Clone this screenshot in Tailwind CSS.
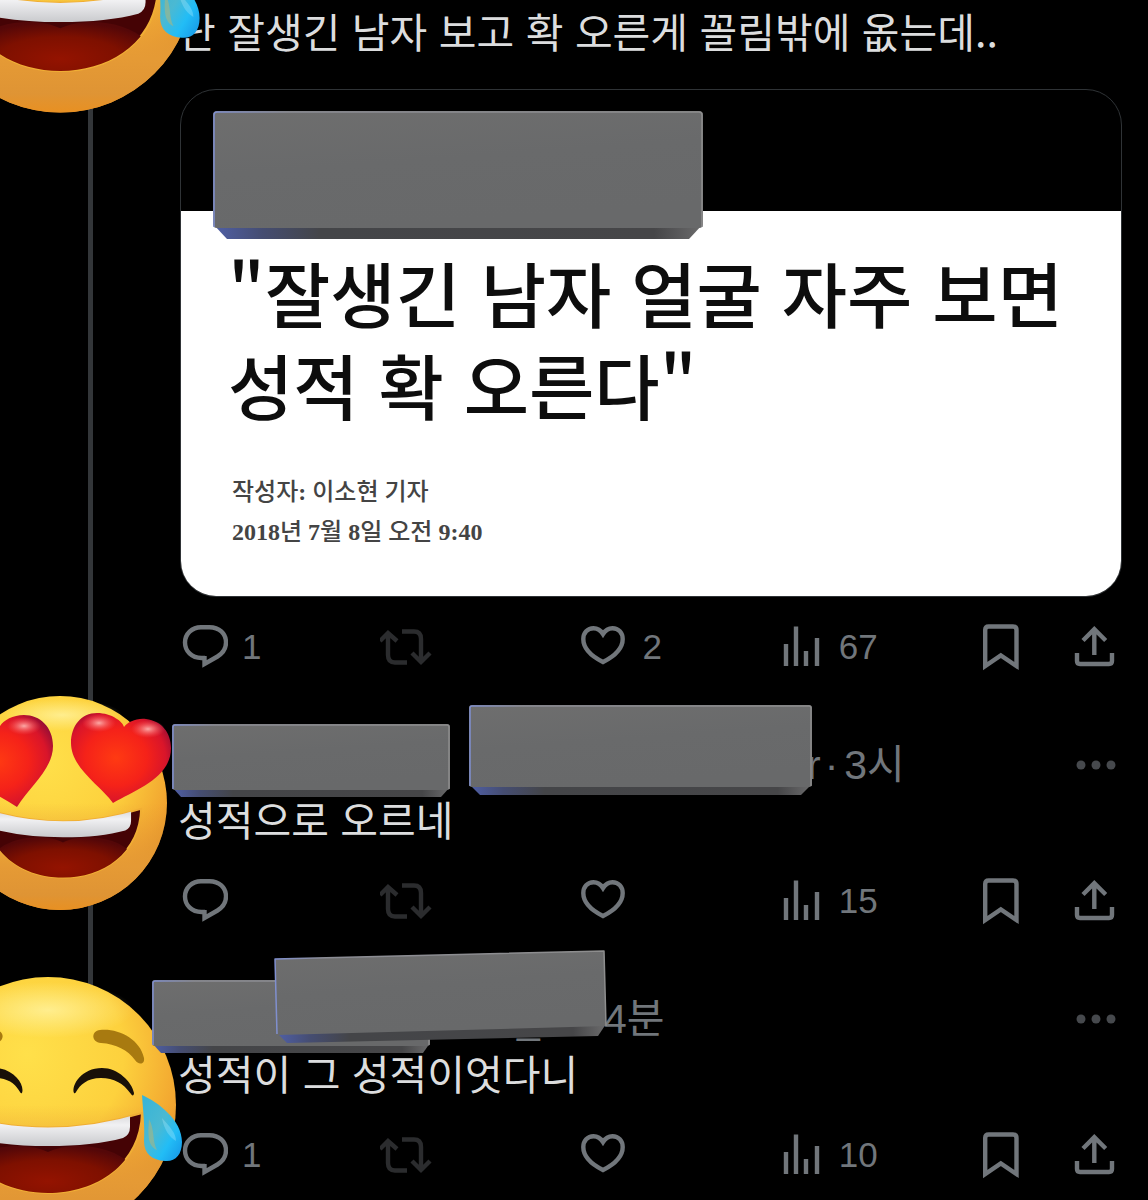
<!DOCTYPE html>
<html lang="ko">
<head>
<meta charset="utf-8">
<meta name="viewport" content="width=device-width, initial-scale=1">
<title>스레드</title>
<script src="https://cdn.jsdelivr.net/npm/@tailwindcss/browser@4"></script>
</head>
<body class="bg-black">

<!-- Shared drawings -->
<svg class="absolute h-0 w-0" aria-hidden="true">
  <defs>
    <radialGradient id="face" cx="0.42" cy="0.3" r="0.75">
      <stop offset="0" stop-color="#ffe04a"/><stop offset="0.5" stop-color="#fdd13d"/><stop offset="0.8" stop-color="#f2a630"/><stop offset="1" stop-color="#d98422"/>
    </radialGradient>
    <linearGradient id="chin" x1="0" y1="0" x2="0" y2="1">
      <stop offset="0.5" stop-color="#e59a35" stop-opacity="0"/><stop offset="0.8" stop-color="#e59a35"/><stop offset="0.93" stop-color="#df9434"/><stop offset="1" stop-color="#e89022"/>
    </linearGradient>
    <radialGradient id="shine" cx="0.5" cy="0.5" r="0.5">
      <stop offset="0" stop-color="#fff3a0" stop-opacity="0.8"/><stop offset="1" stop-color="#fff3a0" stop-opacity="0"/>
    </radialGradient>
    <linearGradient id="teeth" x1="0" y1="0" x2="0" y2="1">
      <stop offset="0" stop-color="#cfcfd2"/><stop offset="0.4" stop-color="#f1f1f3"/><stop offset="1" stop-color="#c9cacd"/>
    </linearGradient>
    <radialGradient id="tongue" cx="0.5" cy="0.6" r="0.6">
      <stop offset="0" stop-color="#941300"/><stop offset="0.6" stop-color="#7e1000"/><stop offset="1" stop-color="#540708"/>
    </radialGradient>
    <linearGradient id="tear" x1="0" y1="0" x2="1" y2="1">
      <stop offset="0" stop-color="#35b4d8"/><stop offset="0.45" stop-color="#4bb9d2"/><stop offset="0.7" stop-color="#22bdf6"/><stop offset="1" stop-color="#1593e6"/>
    </linearGradient>
    <radialGradient id="heartfill" cx="0.45" cy="0.5" r="0.62">
      <stop offset="0" stop-color="#ff3a12"/><stop offset="0.5" stop-color="#f52219"/><stop offset="0.8" stop-color="#d9152a"/><stop offset="1" stop-color="#960d35"/>
    </radialGradient>
    <radialGradient id="gloss" cx="0.5" cy="0.5" r="0.5">
      <stop offset="0" stop-color="#ffb9b4" stop-opacity="0.9"/><stop offset="1" stop-color="#ff5a5a" stop-opacity="0"/>
    </radialGradient>
    <linearGradient id="slab" x1="0" y1="0" x2="0.3" y2="1">
      <stop offset="0" stop-color="#6e6e6e"/><stop offset="0.5" stop-color="#696a6b"/><stop offset="1" stop-color="#68696a"/>
    </linearGradient>
    <linearGradient id="bevel" x1="0" y1="0" x2="1" y2="0">
      <stop offset="0" stop-color="#4f5fa6"/><stop offset="0.1" stop-color="#454d72"/><stop offset="0.22" stop-color="#444548"/><stop offset="0.9" stop-color="#464648"/><stop offset="1" stop-color="#6b6b6c"/>
    </linearGradient>
    <linearGradient id="rim" x1="0" y1="0" x2="1" y2="0">
      <stop offset="0" stop-color="#7f8fd0"/><stop offset="0.15" stop-color="#8b8c94"/><stop offset="1" stop-color="#8d8d8d"/>
    </linearGradient>
    <clipPath id="joymouth"><path d="M94 8Q0 37-94 8C-92 60-48 88 0 88S92 60 94 8Z"/></clipPath>

    <symbol id="joy" viewBox="-136 -136 280 272">
      <circle r="128" fill="url(#face)"/>
      <circle r="128" fill="url(#chin)"/>
      <ellipse cx="0" cy="-95" rx="85" ry="28" fill="url(#shine)"/>
      <path d="M94 8Q0 37-94 8C-92 60-48 88 0 88S92 60 94 8Z" fill="#450305" stroke="#f0ae35" stroke-width="2"/>
      <g clip-path="url(#joymouth)">
        <path d="M0 47C20 37 62 38 84 60V100H-84V60C-62 38-20 37 0 47Z" fill="url(#tongue)"/>
        <path d="M94 6Q0 37-94 6L-82 32Q-45 41 0 41Q45 41 75 33Q82 30 82 22V10Z" fill="url(#teeth)"/>
      </g>
      <g id="joyeye">
        <path d="M26-12C23-20 34-37 54-37C70-37 84-23 86-12C86-9 84-9 83-11C75-22 66-27 53-27C39-27 32-20 28-13Q27-11 26-12Z" fill="#191008"/>
        <path d="M52-75C70-77 92-66 96-47C97-40 90-40 87-45C80-55 68-61 53-62C43-63 43-74 52-75Z" fill="#a87a10"/>
      </g>
      <use href="#joyeye" transform="scale(-1 1)"/>
      <path d="M94-10C110-3 134 15 134 37C134 50 127 57 117 56C104 55 96 49 96 36C97 20 95 6 94-10Z" fill="url(#tear)"/>
      <path d="M101 14C107 25 104 36 109 45C99 41 100 27 101 14Z" fill="#d7b45a" opacity="0.4"/>
      <path d="M114 13C122 22 128 28 128 36C121 32 116 24 114 13Z" fill="#b9f0ff" opacity="0.3"/>
    </symbol>

    <symbol id="love" viewBox="-120 -112 240 224">
      <circle r="107" fill="url(#face)"/>
      <circle r="107" fill="url(#chin)"/>
      <ellipse cx="2" cy="-88" rx="60" ry="16" fill="url(#shine)"/>
      <g transform="translate(3 -1) scale(.83 .86)">
        <path d="M94 8Q0 37-94 8C-92 60-48 88 0 88S92 60 94 8Z" fill="#450305" stroke="#f0ae35" stroke-width="2"/>
        <g clip-path="url(#joymouth)">
          <path d="M0 47C20 37 62 38 84 60V100H-84V60C-62 38-20 37 0 47Z" fill="url(#tongue)"/>
          <path d="M94 6Q0 37-94 6L-82 32Q-45 41 0 41Q45 41 75 33Q82 30 82 22V10Z" fill="url(#teeth)"/>
        </g>
      </g>
      <path d="M53 0C40-18 11-35 11-60C11-77 21-90 37-90C52-90 63-81 64-76C68-81 76-85 86-84C102-82 111-70 111-55C111-26 78-14 53 0Z" fill="url(#heartfill)"/>
      <ellipse cx="39" cy="-80" rx="17" ry="9" fill="url(#gloss)"/>
      <ellipse cx="88" cy="-74" rx="17" ry="9" fill="url(#gloss)"/>
      <path d="M-43 4C-30-17-7-34-7-57C-7-76-20-88-36-88C-50-88-60-80-62-73C-66-80-76-84-86-82C-102-79-110-66-108-52C-105-26-70-14-43 4Z" fill="url(#heartfill)"/>
      <ellipse cx="-36" cy="-77" rx="17" ry="9" fill="url(#gloss)"/>
    </symbol>

    <symbol id="reply" viewBox="-1 0 48 48"><path d="M24 35H20.500C10.500 35 4 28 4 19.500S11 4.200 20 4.200H28.500C38 4.200 45 10.500 45 19.500C45 25.500 41.500 30.500 36.500 33.500L23.500 41V33" fill="none" stroke="currentColor" stroke-width="4.400"/></symbol>
    <symbol id="repost" viewBox="1 -1 52 48"><path d="M1 17L9 9L18 17M9 10V31Q9 38.500 16 38.500H28M23 7.500H35Q42 7.500 42 15V37M33 29L42 38L51 29" fill="none" stroke="currentColor" stroke-width="4.400"/></symbol>
    <symbol id="like" viewBox="2 0 48 48"><path d="M24 13C21 8 17.500 7.200 14.500 7.200C8.500 7.200 4.300 12 4.300 18C4.300 28 14 36 24 41C34 36 43.700 28 43.700 18C43.700 12 39.500 7.200 33.500 7.200C30.500 7.200 27 8 24 13Z" transform="translate(0 -2)" fill="none" stroke="currentColor" stroke-width="4.400"/></symbol>
    <symbol id="views" viewBox="0 0 44 48"><path d="M5 21V43M15 3.500V43M25 28V43M36 15V43" fill="none" stroke="currentColor" stroke-width="4.400"/></symbol>
    <symbol id="save" viewBox="0 0 40 48"><path d="M4.200 43V7Q4.200 3.500 7.700 3.500H32Q35.500 3.500 35.500 7V43L19.800 32.500Z" fill="none" stroke="currentColor" stroke-width="4.400"/></symbol>
    <symbol id="share" viewBox="0 0 44 48"><path d="M10 17.500L21.300 6.200L32.700 17.500M21.300 7V32M4 30V38Q4 41 7 41H36Q39 41 39 38V30" fill="none" stroke="currentColor" stroke-width="4.400"/></symbol>
    <symbol id="more" viewBox="0 0 40 12"><g fill="currentColor"><circle cx="5" cy="6" r="4.500"/><circle cx="20" cy="6" r="4.500"/><circle cx="35" cy="6" r="4.500"/></g></symbol>
  </defs>
</svg>

<main class="relative min-h-screen overflow-hidden bg-black font-['Liberation_Sans','Noto_Sans_CJK_KR',sans-serif] text-[#dcddde]">

  <article class="relative flex pr-[26px]">
    <div class="w-[180px] shrink-0 pl-[88px]"><div class="h-full w-[5px] bg-[#333639]"></div></div>
    <div class="min-w-0 flex-1 pt-[5px]">
      <p class="-ml-0.5 pb-1.5 whitespace-nowrap font-['Noto_Sans_CJK_KR',sans-serif] text-[41px] leading-[50px]">난 잘생긴 남자 보고 확 오른게 꼴림밖에 옶는데..</p>
      <div class="mt-7 overflow-hidden rounded-[36px] border border-[#2f3336]">
        <div class="h-[121px]"></div>
        <div class="h-[385px] bg-white pl-[51px] font-['Noto_Sans_CJK_KR',sans-serif] text-[#0d0d0d]">
          <h2 class="-ml-1 pt-[34px] whitespace-nowrap text-[71px] leading-[92px] font-medium">"잘생긴 남자 얼굴 자주 보면<br>성적 확 오른다"</h2>
          <p class="mt-[43px] font-['Liberation_Serif','Noto_Sans_CJK_KR',serif] text-[24px] leading-[40px] font-medium text-[#444]">작성자<span class="font-bold">:</span> 이소현 기자<br><span class="font-bold">2018</span>년 <span class="font-bold">7</span>월 <span class="font-bold">8</span>일 오전 <span class="font-bold">9:40</span></p>
        </div>
      </div>
      <div class="mt-[26px] flex h-12 text-[35px] text-[#71767b]">
        <button aria-label="답글" class="flex flex-1 items-center gap-3.5"><svg class="h-12 w-12"><use href="#reply"/></svg>1</button>
        <button aria-label="재게시" class="flex flex-1 items-center text-[#2b2c2e]"><svg class="h-12 w-[52px]"><use href="#repost"/></svg></button>
        <button aria-label="마음에 들어요" class="flex flex-1 items-center gap-3.5"><svg class="h-12 w-12"><use href="#like"/></svg>2</button>
        <button aria-label="조회수" class="flex flex-1 items-center gap-3.5"><svg class="h-12 w-11"><use href="#views"/></svg>67</button>
        <div class="flex w-[141px] gap-[52px]">
          <button aria-label="북마크"><svg class="h-12 w-10"><use href="#save"/></svg></button>
          <button aria-label="공유"><svg class="h-12 w-11"><use href="#share"/></svg></button>
        </div>
      </div>
    </div>
    <svg class="absolute top-[-162px] left-[-81px] h-[283px] w-[291px]" role="img" aria-label="웃음 이모지"><use href="#joy"/></svg>
    <svg class="absolute top-[111px] left-[213px] h-[128px] w-[490px]" viewBox="0 0 490 128" aria-hidden="true">
      <path d="M0 113L14 128H476L490 113Z" fill="url(#bevel)"/>
      <rect width="490" height="117" rx="4" fill="url(#slab)"/>
      <path d="M1 116V4Q1 1 4 1H486Q489 1 489 4V116" fill="none" stroke="url(#rim)" stroke-width="1.500"/>
    </svg>
  </article>

  <article class="relative flex pr-[26px]">
    <div class="w-[180px] shrink-0 pl-[88px]"><div class="h-full w-[5px] bg-[#333639]"></div></div>
    <div class="min-w-0 flex-1 pt-[66px]">
      <header class="flex items-center text-[41px] leading-[56px] text-[#71767b]">
        <span class="w-[271px] text-right text-[#dcddde]">)</span>
        <span class="ml-[356px]">r</span>
        <span class="ml-1">·</span><span class="ml-1.5">3시</span>
        <button aria-label="더 보기" class="mr-1.5 ml-auto text-[#46494d]"><svg class="h-3 w-10"><use href="#more"/></svg></button>
      </header>
      <p class="-ml-0.5 pb-1.5 font-['Noto_Sans_CJK_KR',sans-serif] text-[41px] leading-[50px]">성적으로 오르네</p>
      <div class="mt-7 flex h-12 text-[35px] text-[#71767b]">
        <button aria-label="답글" class="flex flex-1 items-center"><svg class="h-12 w-12"><use href="#reply"/></svg></button>
        <button aria-label="재게시" class="flex flex-1 items-center text-[#2b2c2e]"><svg class="h-12 w-[52px]"><use href="#repost"/></svg></button>
        <button aria-label="마음에 들어요" class="flex flex-1 items-center"><svg class="h-12 w-12"><use href="#like"/></svg></button>
        <button aria-label="조회수" class="flex flex-1 items-center gap-3.5"><svg class="h-12 w-11"><use href="#views"/></svg>15</button>
        <div class="flex w-[141px] gap-[52px]">
          <button aria-label="북마크"><svg class="h-12 w-10"><use href="#save"/></svg></button>
          <button aria-label="공유"><svg class="h-12 w-11"><use href="#share"/></svg></button>
        </div>
      </div>
    </div>
    <svg class="absolute top-[20px] left-[-60px] h-[224px] w-[240px]" role="img" aria-label="하트 눈 이모지"><use href="#love"/></svg>
    <svg class="absolute top-[53px] left-[172px] h-[73px] w-[278px]" viewBox="0 0 278 73" aria-hidden="true">
      <path d="M0 63L9 73H269L278 63Z" fill="url(#bevel)"/>
      <rect width="278" height="66" rx="3" fill="url(#slab)"/>
      <path d="M1 65V3Q1 1 3 1H275Q277 1 277 3V65" fill="none" stroke="url(#rim)" stroke-width="1.500"/>
    </svg>
    <svg class="absolute top-[34px] left-[469px] h-[90px] w-[343px]" viewBox="0 0 343 90" aria-hidden="true">
      <path d="M0 79L11 90H332L343 79Z" fill="url(#bevel)"/>
      <rect width="343" height="82" rx="3" fill="url(#slab)"/>
      <path d="M1 81V3Q1 1 3 1H340Q342 1 342 3V81" fill="none" stroke="url(#rim)" stroke-width="1.500"/>
    </svg>
  </article>

  <article class="relative flex pr-[26px]">
    <div class="w-[180px] shrink-0 pl-[88px]"><div class="h-[66px] w-[5px] bg-[#333639]"></div></div>
    <div class="min-w-0 flex-1 pt-[66px]">
      <header class="flex items-center text-[41px] leading-[56px] text-[#71767b]">
        <span class="ml-[337px] w-[87px]">_</span>
        <span>4분</span>
        <button aria-label="더 보기" class="mr-1.5 ml-auto text-[#46494d]"><svg class="h-3 w-10"><use href="#more"/></svg></button>
      </header>
      <p class="-ml-0.5 pb-1.5 font-['Noto_Sans_CJK_KR',sans-serif] text-[41px] leading-[50px]">성적이 그 성적이엇다니</p>
      <div class="mt-7 flex h-12 text-[35px] text-[#71767b]">
        <button aria-label="답글" class="flex flex-1 items-center gap-3.5"><svg class="h-12 w-12"><use href="#reply"/></svg>1</button>
        <button aria-label="재게시" class="flex flex-1 items-center text-[#2b2c2e]"><svg class="h-12 w-[52px]"><use href="#repost"/></svg></button>
        <button aria-label="마음에 들어요" class="flex flex-1 items-center"><svg class="h-12 w-12"><use href="#like"/></svg></button>
        <button aria-label="조회수" class="flex flex-1 items-center gap-3.5"><svg class="h-12 w-11"><use href="#views"/></svg>10</button>
        <div class="flex w-[141px] gap-[52px]">
          <button aria-label="북마크"><svg class="h-12 w-10"><use href="#save"/></svg></button>
          <button aria-label="공유"><svg class="h-12 w-11"><use href="#share"/></svg></button>
        </div>
      </div>
    </div>
    <svg class="absolute top-[44px] left-[-88px] h-[272px] w-[280px]" role="img" aria-label="웃음 이모지"><use href="#joy"/></svg>
    <svg class="absolute top-[55px] left-[152px] h-[73px] w-[278px]" viewBox="0 0 278 73" aria-hidden="true">
      <path d="M0 63L9 73H271L278 63Z" fill="url(#bevel)"/>
      <rect width="278" height="66" rx="3" fill="url(#slab)"/>
      <path d="M1 65V3Q1 1 3 1H275Q277 1 277 3V65" fill="none" stroke="url(#rim)" stroke-width="1.500"/>
    </svg>
    <svg class="absolute top-[25px] left-[274px] h-[94px] w-[333px]" viewBox="0 0 333 94" aria-hidden="true">
      <path d="M3 83L13 93L324 86L332 74Z" fill="url(#bevel)"/>
      <path d="M1 9L330 1L332 76L3 85Z" fill="url(#slab)"/>
      <path d="M3 84L1 9L330 1L332 76" fill="none" stroke="url(#rim)" stroke-width="1.500" stroke-linejoin="round"/>
    </svg>
  </article>

</main>
</body>
</html>
